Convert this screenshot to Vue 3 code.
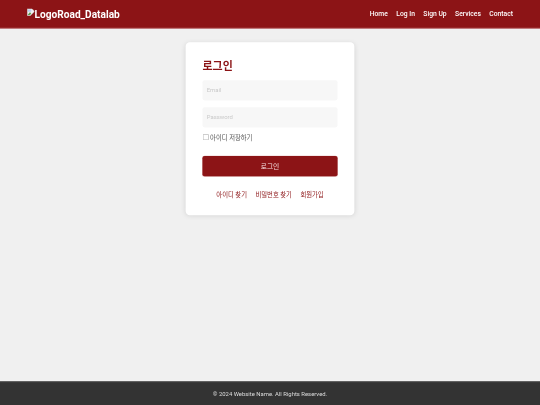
<script setup>
const navItems = ['Home', 'Log In', 'Sign Up', 'Services', 'Contact']
const links = ['아이디 찾기', '비밀번호 찾기', '회원가입']
</script>

<template>
  <div class="viewport">
    <div class="page">
      <header class="header">
        <a class="logo">
          <svg class="broken" width="18" height="18" viewBox="0 0 16 16">
            <path d="M0.5 0.5H10.5L15.5 5.5V7L7 15.5H0.5Z" fill="#f2f2f2" stroke="#b5b5b5" />
            <path d="M2 2H9V7H2Z" fill="#b9cdf0" />
            <path d="M2 13L6 8L9 10L6.5 14H2Z" fill="#5f9e4e" />
          </svg>
          <span>LogoRoad_Datalab</span>
        </a>
        <nav class="nav">
          <a v-for="item in navItems" :key="item">{{ item }}</a>
        </nav>
      </header>
      <main class="main">
        <section class="card">
          <h2>로그인</h2>
          <input class="field" type="text" placeholder="Email" />
          <input class="field second" type="password" placeholder="Password" />
          <label class="remember"><input type="checkbox" /><span>아이디 저장하기</span></label>
          <button class="submit" type="button">로그인</button>
          <div class="links">
            <a v-for="link in links" :key="link">{{ link }}</a>
          </div>
        </section>
      </main>
      <footer class="footer">© 2024 Website Name. All Rights Reserved.</footer>
    </div>
  </div>
</template>

<style>
html, body { margin: 0; background: #f0f0f0; overflow: hidden; }
</style>

<style scoped>
.viewport { width: 540px; height: 405px; overflow: hidden; }
.page {
  width: 1280px;
  height: 960px;
  transform: scale(0.421875);
  transform-origin: 0 0;
  filter: blur(0.9px);
  display: flex;
  flex-direction: column;
  font-family: Roboto, "Noto Sans CJK KR", sans-serif;
  background: #f0f0f0;
}
.header {
  height: 66px;
  flex: none;
  border-bottom: 2px solid #c98a8c;
  background: #8c1416;
  display: flex;
  align-items: center;
  justify-content: space-between;
  padding: 0 64px;
  color: #fff;
}
.logo { display: flex; align-items: center; font-size: 24px; font-weight: 700; margin-top: 1px; }
.broken { margin-top: -10px; }
.nav { display: flex; gap: 20px; font-size: 16px; font-weight: 500; margin-top: 1px; }
.main { flex: 1; display: flex; justify-content: center; align-items: flex-start; padding-top: 32px; }
.card {
  width: 400px;
  height: 410px;
  box-sizing: border-box;
  background: #fff;
  border-radius: 10px;
  box-shadow: 0 2px 12px rgba(0, 0, 0, 0.1);
  padding: 43px 40px 0;
  display: flex;
  flex-direction: column;
}
h2 {
  margin: 0;
  flex: none;
  font-size: 26px;
  line-height: 28px;
  font-weight: 700;
  color: #8c1416;
}
.field {
  display: block;
  flex: none;
  width: 100%;
  height: 48px;
  box-sizing: border-box;
  margin-top: 19px;
  padding: 0 10px;
  border: 0;
  border-radius: 5px;
  background: #f7f7f7;
  font: 14px Roboto, sans-serif;
  outline: 0;
}
.field::placeholder { color: #c9c9c9; }
.second { margin-top: 16px; }
.remember {
  display: flex;
  flex: none;
  align-items: center;
  margin-top: 13px;
  height: 20px;
  font-size: 15px;
  color: #555;
}
.remember input { width: 14px; height: 14px; margin: 0 3px 0 1px; }
.submit {
  margin-top: 35px;
  height: 48px;
  flex: none;
  border: 0;
  border-radius: 5px;
  background: #8c1416;
  box-shadow: 0 0 0 1px #d9a8a8;
  color: #f5dede;
  font: 16px Roboto, "Noto Sans CJK KR", sans-serif;
  padding: 0;
}
.links {
  display: flex;
  flex: none;
  justify-content: center;
  gap: 20px;
  margin-top: 34px;
  font-size: 15px;
  line-height: 20px;
  color: #8c1416;
}
.footer {
  height: 54px;
  flex: none;
  background: #333;
  border-top: 2px solid #555;
  color: #ddd;
  font-size: 14px;
  display: flex;
  align-items: center;
  justify-content: center;
}
</style>
